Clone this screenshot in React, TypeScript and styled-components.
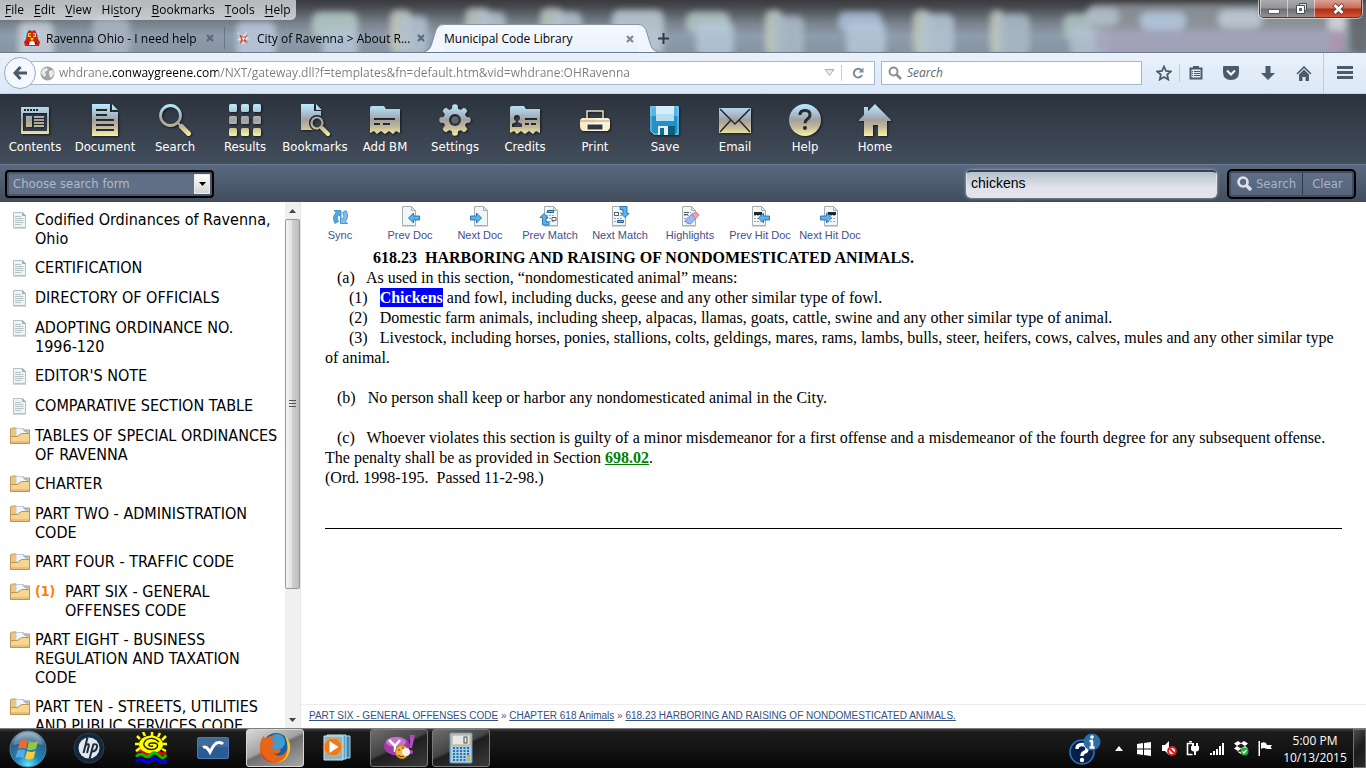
import React, { useId, useState } from "react";
import styled, { createGlobalStyle, css } from "styled-components";

const ui = `"Open Sans", "Noto Sans", sans-serif`;
const tahoma = `"DejaVu Sans Condensed", "Noto Sans", sans-serif`;
const arial = `"Liberation Sans", Arial, sans-serif`;
const times = `"Liberation Serif", "Times New Roman", serif`;

const GlobalStyle = createGlobalStyle`
  * { box-sizing: border-box; }
  body { margin: 0; background: #fff; color: #000; font-family: ${ui}; }
  button { border: 0; padding: 0; margin: 0; background: none; color: inherit; font: inherit; cursor: pointer; }
  svg { display: block; flex: none; }
`;

const Page = styled.div`
  height: 100vh;
  display: flex;
  flex-direction: column;
  overflow: hidden;
`;

/* ---------- window frame ---------- */

const Frame = styled.header`
  position: relative;
  height: 53px;
  flex: none;
  overflow: hidden;
  background: linear-gradient(#393b3e 0, #45484c 6px, #7b858f 24px, #8f9cab 36px, #8794a2 52px);
  border-bottom: 1px solid #6f7c8d;
`;

const Glass = styled.svg`
  position: absolute;
  inset: 0;
  width: 100%;
  height: 100%;
`;

const FrameContent = styled.div`
  position: relative;
  height: 100%;
  display: flex;
  flex-direction: column;
  justify-content: space-between;
`;

const TopRow = styled.div`
  display: flex;
  justify-content: space-between;
  align-items: flex-start;
  height: 20px;
`;

const MenuBar = styled.nav`
  display: flex;
  height: 20px;
  padding: 0 5px;
  gap: 10px;
  border-bottom-right-radius: 5px;
  background: rgba(232, 234, 237, 0.72);
  font-size: 12px;
  line-height: 20px;
  u { text-underline-offset: 2px; }
`;

const WindowButtons = styled.div`
  display: flex;
  height: 18px;
  margin-right: 4px;
  border: 1px solid #3b4046;
  border-top: 0;
  border-radius: 0 0 5px 5px;
  box-shadow: 0 0 0 1px rgba(255, 255, 255, 0.55);
  overflow: hidden;
`;

const WindowButton = styled.button<{ $close?: boolean }>`
  width: ${(p) => (p.$close ? 47 : 27)}px;
  display: flex;
  align-items: center;
  justify-content: center;
  border-left: 1px solid rgba(240, 240, 240, 0.6);
  background: ${(p) =>
    p.$close
      ? "linear-gradient(#d9a195 0, #cc6b58 8px, #b02a10 9px, #d0563a 17px)"
      : "linear-gradient(#a9abae 0, #929498 8px, #6c6e72 9px, #94918f 17px)"};
`;

const TabStrip = styled.div`
  display: flex;
  height: 28px;
  padding-left: 14px;
  font-size: 12px;
`;

const Tab = styled.div`
  display: flex;
  align-items: center;
  width: 210px;
  padding: 0 6px 0 10px;
`;

const TabDivider = styled.i`
  width: 1px;
  margin: 3px 0 3px 0;
  height: 22px;
  background: rgba(80, 92, 106, 0.55);
`;

const TabTitle = styled.button`
  display: flex;
  align-items: center;
  gap: 6px;
  flex: 1;
  min-width: 0;
  text-align: left;
  white-space: nowrap;
`;

const CloseButton = styled.button`
  width: 16px;
  height: 16px;
  display: grid;
  place-items: center;
`;

const ActiveTab = styled.div`
  display: flex;
  height: 28px;
  margin-left: -11px;
`;

const ActiveBody = styled.div`
  display: flex;
  align-items: center;
  width: 194px;
  background: linear-gradient(#f6faff, #e9f1fb);
  border-top: 1px solid #8996a6;
`;

const NewTab = styled.button`
  width: 24px;
  margin-left: -7px;
  display: grid;
  place-items: center;
`;

/* ---------- navigation bar ---------- */

const NavBar = styled.div`
  flex: none;
  height: 41px;
  display: flex;
  align-items: center;
  padding-left: 4px;
  background: linear-gradient(#e9f1fb, #dbe8f7);
  border-bottom: 1px solid #c3d3e6;
`;

const BackButton = styled.button`
  position: relative;
  z-index: 1;
  width: 32px;
  height: 32px;
  flex: none;
  border: 1px solid #98a9bf;
  border-radius: 50%;
  background: #f5f9fe;
  display: grid;
  place-items: center;
`;

const Field = styled.div<{ $kind: "address" | "search" }>`
  height: 24px;
  display: flex;
  align-items: center;
  background: #fff;
  border: 1px solid #a5b7ce;
  ${(p) =>
    p.$kind === "address"
      ? css`
          flex: 834 1 0;
          margin-left: -6px;
          padding-left: 9px;
        `
      : css`
          flex: 253 1 0;
          margin-left: 6px;
          padding-left: 6px;
        `}
`;

const UrlInput = styled.input`
  flex: 1;
  min-width: 0;
  height: 22px;
  margin-left: 4px;
  padding: 0;
  border: 0;
  outline: 0;
  font: 12px/22px ${ui};
  color: transparent;
  background: linear-gradient(to right, #7b7b7b 50px, #000 50px, #000 159px, #7b7b7b 159px);
  background-clip: text;
  -webkit-background-clip: text;
`;

const SearchInput = styled.input`
  flex: 1;
  min-width: 0;
  padding: 0;
  margin-left: 5px;
  border: 0;
  outline: 0;
  background: none;
  font: 12px/22px ${ui};
  &::placeholder { color: #666; font-style: italic; opacity: 1; }
`;

const ReloadButton = styled.button`
  width: 33px;
  height: 16px;
  border-left: 1px solid #c5d0dd;
  display: grid;
  place-items: center;
`;

const NavIcons = styled.div`
  display: flex;
  align-items: center;
  padding-left: 6px;
  height: 100%;
`;

const NavButton = styled.button<{ $w: number; $sep?: "short" | "full" }>`
  width: ${(p) => p.$w}px;
  height: ${(p) => (p.$sep === "full" ? "100%" : "18px")};
  display: grid;
  place-items: center;
  ${(p) => p.$sep && css`border-left: 1px solid #bccadb;`}
`;

/* ---------- site toolbar ---------- */

const Toolbar = styled.nav`
  flex: none;
  height: 70px;
  display: flex;
  background: linear-gradient(#2b323c, #434e5d);
`;

const ToolButton = styled.button`
  width: 70px;
  height: 70px;
  padding-top: 10px;
  display: flex;
  flex-direction: column;
  align-items: center;
  gap: 2px;
  color: #fff;
  font: 13px/18px ${tahoma};
  svg { filter: drop-shadow(1px 1px 1px rgba(0, 0, 0, 0.6)); }
`;

const QueryBar = styled.form`
  flex: none;
  height: 38px;
  display: flex;
  align-items: center;
  padding: 0 10px 0 5px;
  border-top: 1px solid #6c7c93;
  background: linear-gradient(#596980, #414d5c);
`;

const SelectBox = styled.label`
  position: relative;
  width: 209px;
  height: 28px;
  border: 2px solid #000;
  border-radius: 4px;
  padding: 2px;
  background: #48556a;
`;

const FormSelect = styled.select`
  display: block;
  width: 100%;
  height: 20px;
  appearance: none;
  border: 0;
  padding: 0 24px 0 4px;
  background: #606e86;
  color: #b0bac8;
  font: 13px/20px ${tahoma};
`;

const SelectArrow = styled.span`
  position: absolute;
  right: 2px;
  top: 2px;
  width: 16px;
  height: 20px;
  display: grid;
  place-items: center;
  background: linear-gradient(#fff, #d4d4d4);
  border: 1px solid #eee;
  pointer-events: none;
`;

const QueryInput = styled.input`
  width: 251px;
  height: 28px;
  margin-left: auto;
  padding: 0 4px 3px;
  border: 1px solid #dfe3e8;
  border-top: 2px solid #38424e;
  border-radius: 5px;
  outline: 0;
  background: linear-gradient(#b4c0cb, #dfe2ea 15px, #e3e5ec);
  box-shadow: 0 0 3px #b9c3cf;
  font: 14px/20px ${arial};
`;

const QueryButtons = styled.div`
  display: flex;
  margin-left: 10px;
  height: 30px;
  border: 2px solid #000;
  border-radius: 5px;
  padding: 2px;
  background: #414d5d;
`;

const QueryButton = styled.button<{ $w: number }>`
  width: ${(p) => p.$w}px;
  display: flex;
  align-items: center;
  justify-content: center;
  gap: 4px;
  background: linear-gradient(#5f6e86, #56647b);
  color: #a9b4c4;
  font: 13px/18px ${tahoma};
  & + & { border-left: 1px solid #323c49; }
`;

/* ---------- main ---------- */

const Main = styled.main`
  flex: 1;
  min-height: 0;
  display: flex;
`;

const Sidebar = styled.aside`
  width: 301px;
  flex: none;
  display: flex;
  overflow: hidden;
`;

const Contents = styled.ul`
  flex: 1;
  margin: 0;
  padding: 8px 6px 0 10px;
  list-style: none;
  overflow: hidden;
  font: 16px/19px ${tahoma};
`;

const ContentsItem = styled.li`
  display: flex;
  min-height: 20px;
  margin-bottom: 10px;
`;

const ItemIcon = styled.span`
  width: 25px;
  flex: none;
`;

const HitCount = styled.b`
  width: 30px;
  flex: none;
  color: #ff8000;
  font-size: 14px;
`;

const ItemLink = styled.a`
  color: #000;
  text-decoration: none;
`;

const ScrollTrack = styled.div`
  width: 16px;
  flex: none;
  display: flex;
  flex-direction: column;
  background: #f0f0f0;
  border-right: 1px solid #e6e6e6;
`;

const ScrollArrow = styled.span`
  height: 17px;
  display: grid;
  place-items: center;
`;

const ScrollThumb = styled.span`
  flex: 3;
  display: grid;
  place-items: center;
  border: 1px solid #979797;
  border-radius: 2px;
  background: linear-gradient(to right, #f4f4f4, #e3e3e3 45%, #cfcfcf 50%, #bdbdbd);
`;

const ScrollRest = styled.span`
  flex: 1;
`;

const Reader = styled.section`
  flex: 1;
  min-width: 0;
  display: flex;
  flex-direction: column;
`;

const ReaderTools = styled.nav`
  flex: none;
  display: flex;
  height: 46px;
  padding: 4px 4px 0;
`;

const ReaderTool = styled.button`
  width: 70px;
  display: flex;
  flex-direction: column;
  align-items: center;
  white-space: nowrap;
  color: #46508c;
  font: 11px/16px ${arial};
`;

const Article = styled.article`
  flex: 1;
  min-height: 0;
  padding: 0 24px;
  overflow: hidden;
  font: 16px/20px ${times};
  hr { margin: 40px 0 0; border: 0; border-top: 1px solid #000; }
`;

const Heading = styled.h1`
  margin: 0;
  font-size: 16px;
  line-height: 20px;
  text-indent: 48px;
  white-space: pre-wrap;
`;

const Para = styled.p<{ $indent?: number; $gap?: boolean }>`
  margin: ${(p) => (p.$gap ? 20 : 0)}px 0 0;
  text-indent: ${(p) => p.$indent ?? 0}px;
  white-space: pre-wrap;
`;

const Hit = styled.mark`
  display: inline-block;
  text-indent: 0;
  line-height: 19px;
  background: #00f;
  color: #fff;
  font-weight: bold;
`;

const SectionLink = styled.a`
  color: #008000;
  font-weight: bold;
`;

const Crumbs = styled.nav`
  flex: none;
  height: 24px;
  padding-left: 8px;
  border-top: 1px solid #ececec;
  color: #46608c;
  font: 10px/22px ${arial};
  white-space: pre;
  a { color: #33507f; }
`;

/* ---------- taskbar ---------- */

const Taskbar = styled.footer`
  flex: none;
  height: 40px;
  display: flex;
  background: linear-gradient(#3c3c3c, #1c1c1c 3px, #141414 20px, #060606);
  border-top: 1px solid #7d7d7d;
  color: #fff;
`;

const TaskButton = styled.button<{ $look?: "start" | "active" | "running" }>`
  width: ${(p) => (p.$look === "start" ? 56 : 58)}px;
  height: 38px;
  margin: 0 4px 0 0;
  display: grid;
  place-items: center;
  border: 1px solid transparent;
  border-radius: 3px;
  ${(p) =>
    p.$look === "active" &&
    css`
      border-color: #d8d8d8;
      background: linear-gradient(155deg, #d8d8d8, #a2a2a2 45%, #6f6f6f 50%, #a8a8a8);
    `}
  ${(p) =>
    p.$look === "running" &&
    css`
      border-color: #7a7a7a;
      background: linear-gradient(155deg, #6e6e6e, #444 45%, #1f1f1f 50%, #3a3a3a);
    `}
`;

const Tray = styled.div`
  margin-left: auto;
  display: flex;
  align-items: center;
`;

const TrayButton = styled.button<{ $w: number }>`
  width: ${(p) => p.$w}px;
  height: 38px;
  display: grid;
  place-items: center;
`;

const Clock = styled.time`
  width: 76px;
  text-align: center;
  font-size: 12px;
  line-height: 17px;
`;

const ShowDesktop = styled.button`
  width: 13px;
  height: 39px;
  border: 1px solid #6f6f6f;
  background: linear-gradient(135deg, #4a4a4a, #1b1b1b 50%, #2a2a2a);
`;

/* ---------- drawings ---------- */

/* Desktop icons seen through the glass frame: x, y, width, height, colour. */
const blobs: [number, number, number, number, string][] = [
  [18, 22, 36, 40, "#c6cdd4"], [92, 18, 38, 40, "#a9b5c2"], [236, 22, 40, 36, "#b9c8da"],
  [312, 12, 46, 26, "#b5c9c8"], [322, 30, 36, 30, "#b4c4d6"], [390, 10, 22, 44, "#c3c9bd"], [400, 16, 28, 40, "#b2c0cf"],
  [465, 8, 26, 40, "#bcc6bb"], [476, 12, 30, 40, "#b1bfcc"], [540, 8, 24, 40, "#bcc6bb"], [552, 12, 30, 40, "#b1bfcc"],
  [612, 10, 52, 44, "#bcc9d6"], [686, 12, 44, 22, "#b3c6c4"], [696, 22, 38, 34, "#b5c7d8"],
  [765, 10, 18, 46, "#bfc9be"], [774, 16, 30, 40, "#a9b8c6"], [838, 12, 44, 20, "#a9bfdb"], [846, 22, 40, 34, "#b5c7d8"],
  [913, 10, 18, 46, "#bfc9be"], [922, 14, 32, 42, "#b3c3d1"], [990, 10, 14, 46, "#bfc9be"], [1000, 14, 30, 42, "#a9b8c6"],
  [1063, 14, 40, 26, "#aec2c1"], [1070, 26, 40, 30, "#b1c1d0"], [1088, 4, 260, 26, "#8f959c"], [1085, 8, 34, 18, "#b4bfca"], [1140, 12, 46, 18, "#b4c8de"],
  [1218, 10, 44, 18, "#c2cdd6"], [1328, 12, 18, 22, "#d4d9dc"],
  [1095, 30, 250, 24, "#a5a3bb"], [1330, 30, 14, 24, "#ad93ad"], [1350, 0, 20, 54, "#626569"],
];

const GlassBackdrop = () => (
  <Glass aria-hidden="true">
    <defs>
      <filter id="soft" x="-2%" y="-50%" width="104%" height="200%">
        <feGaussianBlur stdDeviation="3" />
      </filter>
    </defs>
    <g filter="url(#soft)">
      {blobs.map(([x, y, w, h, c], i) => (
        <rect key={i} x={x} y={y} width={w} height={h} rx="8" fill={c} opacity="0.85" />
      ))}
    </g>
  </Glass>
);

const Cross = ({ color = "#5d6977" }) => (
  <svg width="8" height="8" viewBox="0 0 8 8" aria-hidden="true">
    <path d="M1 1l6 6M7 1l-6 6" stroke={color} strokeWidth="2.2" />
  </svg>
);

/* Shape cut out of a blue-to-sand gradient: white parts show, black parts are holes. */
const Metal = ({ children }: { children: React.ReactNode }) => {
  const id = useId();
  return (
    <svg width="32" height="32" viewBox="0 0 32 32" aria-hidden="true">
      <defs>
        <linearGradient id={`${id}g`} x1="0" y1="0" x2="0" y2="1">
          <stop offset="0" stopColor="#b9ecff" />
          <stop offset="0.3" stopColor="#a9bfd0" />
          <stop offset="0.5" stopColor="#a3a09f" />
          <stop offset="0.72" stopColor="#c3b998" />
          <stop offset="1" stopColor="#faf3a4" />
        </linearGradient>
        <mask id={`${id}m`} maskUnits="userSpaceOnUse" x="0" y="0" width="32" height="32">
          {children}
        </mask>
      </defs>
      <rect width="32" height="32" fill={`url(#${id}g)`} mask={`url(#${id}m)`} />
    </svg>
  );
};

const W = "#fff";
const K = "#000";

const ticketPath = "M1 4q0-2 2-2h12l2 3h14v24l-4-2-3 3-4-3-4 3-4-3-4 3-3-3-4 2z";

const toolIcons: Record<string, React.ReactNode> = {
  Contents: (
    <Metal>
      <path fill={W} d="M3 3h26q1 0 1 1v25q0 1-1 1H3q-1 0-1-1V4q0-1 1-1z" />
      <path fill={K} d="M4 9h24v18H4z" />
      <path stroke={K} strokeWidth="2" strokeDasharray="2 1" d="M5 6h14" />
      <path fill={W} d="M7 12h6v11H7zM15 12h10v2H15zM15 15h10v2H15zM15 18h10v2H15zM15 21h10v2H15z" />
    </Metal>
  ),
  Document: (
    <Metal>
      <path fill={W} d="M3 0h18v8h8v24H3zM23 0l6 6h-6z" />
      <path stroke={K} strokeWidth="2" d="M7 6h11M7 11h11M7 16h18M7 21h18M7 26h18" />
    </Metal>
  ),
  Search: (
    <Metal>
      <circle cx="11.500" cy="11.500" r="10" fill="none" stroke={W} strokeWidth="2.800" />
      <path stroke={W} strokeWidth="2" d="M18 18l4 4" />
      <path stroke={W} strokeWidth="5" strokeLinecap="round" d="M22.500 22.500l7 7" />
    </Metal>
  ),
  Results: (
    <Metal>
      {[0, 12, 24].map((y) => [0, 12, 24].map((x) => <rect key={`${x}-${y}`} x={x} y={y} width="8" height="8" rx="1.500" fill={W} />))}
    </Metal>
  ),
  Bookmarks: (
    <Metal>
      <path fill={W} d="M2 0h13v7h7v19H2zM17 0l6 6h-6z" />
      <circle cx="18" cy="19" r="8" fill={K} />
      <circle cx="18" cy="19" r="5.500" fill="none" stroke={W} strokeWidth="2.200" />
      <path stroke={K} strokeWidth="7" d="M22 23l9 9" />
      <path stroke={W} strokeWidth="4" strokeLinecap="round" d="M23 24l6 6" />
    </Metal>
  ),
  "Add BM": (
    <Metal>
      <path fill={W} d={ticketPath} />
      <path stroke={K} strokeWidth="2" d="M5 15h21M5 20h6M14 20h7" />
    </Metal>
  ),
  Settings: (
    <Metal>
      {[0, 45, 90, 135, 180, 225, 270, 315].map((a) => (
        <path key={a} fill={W} d="M12.500 7l1-6q2.500-1.500 5 0l1 6z" transform={`rotate(${a} 16 16)`} />
      ))}
      <circle cx="16" cy="16" r="11.500" fill={W} />
      <circle cx="16" cy="16" r="6" fill={K} />
      <circle cx="16" cy="16" r="3.500" fill={W} opacity="0.450" />
    </Metal>
  ),
  Credits: (
    <Metal>
      <path fill={W} d={ticketPath} />
      <circle cx="8" cy="14" r="3" fill={K} />
      <path fill={K} d="M7 15h2v3l4 2v3H3v-3l4-2z" />
      <path stroke={K} strokeWidth="2" d="M16 15h12M16 20h4M22 20h5" />
    </Metal>
  ),
  Print: (
    <svg width="32" height="32" viewBox="0 0 32 32" aria-hidden="true">
      <path d="M8 14V7h16v7" fill="none" stroke="#efe0b5" strokeWidth="1.500" />
      <path d="M3 14h26l2 2v6q0 4-3 5H4q-3-1-3-5v-6z" fill="#fbe9c0" />
      <path d="M16 14h13l2 2v6q0 4-3 5H16z" fill="#fff3da" opacity="0.700" />
      <path d="M1 17h30" stroke="#a8a191" />
      <path d="M8 20h16v6H8z" fill="#2c3540" stroke="#fff" />
    </svg>
  ),
  Save: (
    <svg width="32" height="32" viewBox="0 0 32 32" aria-hidden="true">
      <path d="M1 2h29v29H5l-4-4z" fill="#2490c4" />
      <path d="M1 2h29v10H1z" fill="#59b5de" />
      <path d="M2 3h27v27H5l-3-3z" fill="none" stroke="#7fd0ef" />
      <path d="M7 2h18v15H7z" fill="#d5eef9" />
      <path d="M7 10h18v7H7z" fill="#b7dff1" />
      <path d="M9 22h17v9H9z" fill="#05617f" />
      <path d="M9 22h10v9H9z" fill="#e6eef2" />
      <path d="M11 24h4v7h-4z" fill="#0b6f98" />
    </svg>
  ),
  Email: (
    <Metal>
      <path fill={W} d="M0 4h32v25H0z" />
      <path stroke={K} strokeWidth="1.500" fill="none" d="M1 5l15 15L31 5M1 28l11-12M31 28L20 16" />
    </Metal>
  ),
  Help: (
    <Metal>
      <circle cx="16" cy="16" r="16" fill={W} />
      <path d="M11 11q0-4.500 5-4.500t5 4.500q0 2.500-2.700 4.300-2.300 1.500-2.300 4" fill="none" stroke={K} strokeWidth="3" />
      <circle cx="16" cy="24" r="2" fill={K} />
    </Metal>
  ),
  Home: (
    <Metal>
      <path fill={W} d="M0 16L5 11V3h4v4l7-7 16 16v1h-4v15h-9V21h-5v11H5V17H0z" />
    </Metal>
  ),
};

const PageIcon = () => (
  <svg width="20" height="20" viewBox="0 0 20 20" aria-hidden="true">
    <path d="M3.500 2.500h9l3 3v12h-12z" fill="#eef4f3" stroke="#b3c3c3" />
    <path d="M12.500 2.500v3h3z" fill="#9fb4b6" stroke="#9fb4b6" />
    <path d="M5 6.500h6M5 8.500h8.500M5 10.500h8.500M5 12.500h8.500M5 14.500h6" stroke="#b4c4c5" />
    <path d="M3 18.500h13" stroke="#d0d8d8" />
  </svg>
);

const FolderIcon = () => (
  <svg width="20" height="20" viewBox="0 0 20 20" aria-hidden="true">
    <path d="M.500 17V3l1-1h5l1 2h12v13z" fill="#e6c68a" stroke="#c19a5b" />
    <path d="M6 11V2.500h8l3 3V9H9z" fill="#f3f7fa" stroke="#c4cfd5" />
    <path d="M12 3l3 3 3 1-1-3z" fill="#9db9c6" />
    <path d="M.500 17.500V10.500h7l4-3h8v10z" fill="#f6d590" stroke="#bd9454" />
    <path d="M1 15h18v2H1z" fill="#eabf70" />
  </svg>
);

const BlueArrow = ({ d }: { d: string }) => <path d={d} fill="#5fb1ea" stroke="#2b78b8" strokeLinejoin="round" />;

const DocSheet = ({ x, children }: { x: number; children?: React.ReactNode }) => (
  <svg width="22" height="21" viewBox="0 0 22 21" aria-hidden="true">
    <g transform={`translate(${x} 0)`}>
      <path d="M.500.500h9l4 4v15H.500z" fill="#f3f6f6" stroke="#a5b1b1" />
      <path d="M9.500.500v4h4z" fill="#dfe6e6" stroke="#a5b1b1" />
      <path d="M0 20.500h14" stroke="#d3d8d8" />
    </g>
    {children}
  </svg>
);

const Lines = ({ x }: { x: number }) => (
  <path d={`M${x} 6.500h7M${x} 9.500h9M${x} 12.500h9M${x} 15.500h9`} stroke="#9aa5a8" strokeDasharray="2 1" />
);

const left = "M9.500 12l5-5v3h6v4h-6v3z";
const right = "M12.500 12l-5-5v3h-6v4h6v3z";

const readerTools: [string, React.ReactNode][] = [
  [
    "Sync",
    <svg width="22" height="21" viewBox="0 0 22 21" aria-hidden="true">
      <path d="M5 4.500h7v6.500L9.800 8.800Q7 11 9.500 15.500L6 17.500Q2.500 11 7.200 6.500z" fill="#55a7e0" stroke="#2e86c8" strokeWidth=".8" />
      <path d="M18.500 17.500h-7V11l2.200 2.200Q16 10.500 13.500 6.500L17 4.500Q20.500 10.500 16.300 15.500z" fill="#7cc0ee" stroke="#2e86c8" strokeWidth=".8" />
    </svg>,
  ],
  ["Prev Doc", <DocSheet x={3}><BlueArrow d={left} /></DocSheet>],
  ["Next Doc", <DocSheet x={5}><BlueArrow d={right} /></DocSheet>],
  [
    "Prev Match",
    <DocSheet x={5}>
      <Lines x={7} />
      <path d="M8.500 4.500h6v2h-6z" fill="#79bff0" stroke="#215f96" />
      <path d="M13 11.500h4v3h-4z" fill="#fff" stroke="#55606a" />
      <BlueArrow d="M1 11.500L5 7.500l4 4H7v4.500h3v3H3.500v-7.500z" />
    </DocSheet>,
  ],
  [
    "Next Match",
    <DocSheet x={3}>
      <Lines x={5} />
      <path d="M5.500 6.500h4v3h-4z" fill="#fff" stroke="#55606a" />
      <path d="M8.500 14.500h6v2h-6z" fill="#79bff0" stroke="#215f96" />
      <BlueArrow d="M20 7.500l-4 4-4-4h2V3.500h-3V.500h7v7z" />
    </DocSheet>,
  ],
  [
    "Highlights",
    <DocSheet x={3}>
      <Lines x={5} />
      <path d="M5 6.500h5M5 8.500h4" stroke="#4d565c" />
      <path d="M13 8l4-2 3 3-4 4.500z" fill="#f3a4a8" stroke="#d27a80" />
      <path d="M13 8l3.500 5-5 5-4-1-1-3z" fill="#9fb8f0" stroke="#7690cf" />
    </DocSheet>,
  ],
  ["Prev Hit Doc", <DocSheet x={3}><Lines x={5} /><path d="M5 7.500h8" stroke="#1c2b33" strokeWidth="3" /><BlueArrow d={left} /></DocSheet>],
  ["Next Hit Doc", <DocSheet x={5}><Lines x={8} /><path d="M9 7.500h8" stroke="#1c2b33" strokeWidth="3" /><BlueArrow d={right} /></DocSheet>],
];

const StartOrb = () => (
  <svg width="38" height="38" viewBox="0 0 38 38" aria-hidden="true">
    <defs>
      <radialGradient id="orb" cx="0.5" cy="0.95" r="0.95">
        <stop offset="0" stopColor="#5fe6ff" />
        <stop offset="0.350" stopColor="#1f86b8" />
        <stop offset="0.750" stopColor="#2d5f86" />
        <stop offset="1" stopColor="#9bb3c4" />
      </radialGradient>
    </defs>
    <circle cx="19" cy="19" r="18" fill="url(#orb)" stroke="#4f7f9e" />
    <path d="M4 15Q7 3 19 3t15 12q-15-5-30 0z" fill="#fff" opacity="0.250" />
    <path d="M11 11q4-2 8 0l-2 8q-4-2-8 0z" fill="#ef6a2c" />
    <path d="M20 11.500q4 2 9-.500l-2 8q-5 2-9 .500z" fill="#93c83e" />
    <path d="M8.500 20.500q4-2 8 0l-2 7.500q-4-2-8 0z" fill="#5aa9e8" />
    <path d="M18 21q4 2 8.500 0l-2 7.500q-5 2-8.500 0z" fill="#fccd3b" />
  </svg>
);

const HpIcon = () => (
  <svg width="32" height="32" viewBox="0 0 32 32" aria-hidden="true">
    <circle cx="16" cy="16" r="15" fill="#14283b" stroke="#2b4053" />
    <circle cx="16" cy="16" r="10.500" fill="#e4e8ec" />
    <path d="M14.500 5.500L10.500 21M12.500 13q4-2 3.300 1L14 21M16.500 27l4-15M20 12.500q5-1 4 2.500-1 5-6 4.500" fill="none" stroke="#1b2d3e" strokeWidth="2" />
  </svg>
);

const SunIcon = () => (
  <svg width="32" height="32" viewBox="0 0 32 32" aria-hidden="true">
    <path d="M1 20q4-4 7 0t8 0 8 0 7 0" fill="none" stroke="#f00000" strokeWidth="3" />
    <path d="M5 7L2 4M10 4L8 0M17 4V0M23 5l2-4M27 8l4-4M28 12h4M4 12H0M5 16l-4 3M27 17l4 2" stroke="#ffff00" strokeWidth="2.500" />
    <ellipse cx="16" cy="12.500" rx="12" ry="9" fill="#ffff00" />
    <path d="M24 10Q18 4 11 8q-5 5 1 8.500 6 2.500 10-1 2-4-3-4.500-6-.500-5 2.500 2 1.500 4 .500" fill="none" stroke="#1a1a00" strokeWidth="1.400" />
    <path d="M1 24.500q4-4 8-1t7-1 8 1 7-1" fill="none" stroke="#00c000" strokeWidth="3" />
    <path d="M1 30q4-4 8-1t7-1 8 1 7-1" fill="none" stroke="#0000e0" strokeWidth="3.500" />
  </svg>
);

const CheckIcon = () => (
  <svg width="32" height="24" viewBox="0 0 32 24" aria-hidden="true">
    <rect x=".500" y="1.500" width="31" height="21" rx="1.500" fill="#2b5b95" stroke="#4c78ad" />
    <path d="M1 2h30v9H1z" fill="#47709f" opacity=".7" />
    <path d="M6 11.500q3.500-2 7 4.500 4.500-9 8-9.500 3-.500 5 1.500" fill="none" stroke="#fff" strokeWidth="3" />
  </svg>
);

const FirefoxIcon = () => (
  <svg width="32" height="32" viewBox="0 0 32 32" aria-hidden="true">
    <circle cx="17" cy="14" r="13" fill="#1c5f9e" />
    <circle cx="18" cy="10" r="8" fill="#3f9bd0" />
    <path d="M1 13Q2 6 5 4l1 3q5-4 10-3-4 2-3 5l4 1q-1 3-5 4 1 4 6 3 2 0 4 2-3 4-8 2 5 5 11 1 6-5 2-15 4 5 3 12-2 12-14 12Q4 31 1 21z" fill="#e8641b" />
    <path d="M26 4q7 6 4.500 16Q27 31 16 31q10-2 12-10t-2-17z" fill="#fcc62d" />
    <path d="M2 17q1 10 11 13-6 0-10-6-1-3-1-7z" fill="#c8371a" />
  </svg>
);

const PlayerIcon = () => (
  <svg width="30" height="28" viewBox="0 0 30 28" aria-hidden="true">
    <path d="M9 2h19v22H9z" fill="#3d87ad" stroke="#9fd0e6" />
    <path d="M5 1h19v24H5z" fill="#5ca2c4" stroke="#b9e0ef" />
    <path d="M2 2h19v24H2z" fill="#8ab6c9" stroke="#cfe6ef" />
    <circle cx="11" cy="13" r="9" fill="#ee7a1a" stroke="#f7a55c" />
    <path d="M7.500 7l9 6-9 6z" fill="#fff" />
  </svg>
);

const MessengerIcon = () => (
  <svg width="32" height="28" viewBox="0 0 32 28" aria-hidden="true">
    <ellipse cx="14" cy="12" rx="13" ry="9.500" fill="#a13ba8" />
    <ellipse cx="13" cy="8" rx="10" ry="5" fill="#d58bd9" opacity=".7" />
    <path d="M6 6l6 6 5-6M12 12v6" fill="none" stroke="#fff" strokeWidth="2.500" />
    <path d="M27 1h5l-3 13h-2z" fill="#b04bbd" />
    <circle cx="28" cy="18" r="2" fill="#b04bbd" />
    <circle cx="19" cy="18" r="6.500" fill="#f4b934" stroke="#c77d14" />
    <circle cx="23" cy="18" r="4" fill="#f3f3f3" />
    <path d="M15 16h2M19 14h2M15 21q3 3 6 1" stroke="#5a3200" fill="none" />
  </svg>
);

const CalculatorIcon = () => (
  <svg width="24" height="32" viewBox="0 0 24 32" aria-hidden="true">
    <rect x="1" y="1" width="22" height="30" rx="1" fill="#a5cfe8" stroke="#5f94b8" />
    <rect x="3" y="3" width="18" height="10" fill="#e3e9e6" stroke="#e79b4b" />
    <rect x="15" y="5" width="3" height="6" fill="none" stroke="#44525c" />
    {[16, 19, 22, 25, 28].map((y) => (
      <path key={y} d={`M4 ${y}h16`} stroke="#356f98" strokeWidth="2" strokeDasharray="2 1.500" />
    ))}
    <path d="M18 23h3v6h-3z" fill="#f2a13c" />
  </svg>
);

const HelpTray = () => (
  <svg width="32" height="32" viewBox="0 0 32 32" aria-hidden="true">
    <circle cx="13" cy="19" r="12" fill="#0a1f48" stroke="#2478c8" strokeWidth="1.500" />
    <path d="M8 16q0-4.500 5-4.500t5 4.500q0 2.500-3 3.500-2 1-2 3.500" fill="none" stroke="#fff" strokeWidth="3.400" />
    <circle cx="13" cy="27" r="2.200" fill="#fff" />
    <circle cx="23" cy="9" r="8.500" fill="#2b6ea6" />
    <path d="M23 8v7M20.500 8H24M20.500 14.500h5" stroke="#fff" strokeWidth="2.600" />
    <circle cx="23" cy="4" r="1.800" fill="#fff" />
  </svg>
);

const sections: { kind: "page" | "folder"; title: string; hits?: number }[] = [
  { kind: "page", title: "Codified Ordinances of Ravenna, Ohio" },
  { kind: "page", title: "CERTIFICATION" },
  { kind: "page", title: "DIRECTORY OF OFFICIALS" },
  { kind: "page", title: "ADOPTING ORDINANCE NO. 1996-120" },
  { kind: "page", title: "EDITOR'S NOTE" },
  { kind: "page", title: "COMPARATIVE SECTION TABLE" },
  { kind: "folder", title: "TABLES OF SPECIAL ORDINANCES OF RAVENNA" },
  { kind: "folder", title: "CHARTER" },
  { kind: "folder", title: "PART TWO - ADMINISTRATION CODE" },
  { kind: "folder", title: "PART FOUR - TRAFFIC CODE" },
  { kind: "folder", title: "PART SIX - GENERAL OFFENSES CODE", hits: 1 },
  { kind: "folder", title: "PART EIGHT - BUSINESS REGULATION AND TAXATION CODE" },
  { kind: "folder", title: "PART TEN - STREETS, UTILITIES AND PUBLIC SERVICES CODE" },
];

const steel = "#4d5a69";

export default function App() {
  const [query, setQuery] = useState("chickens");
  const [url, setUrl] = useState("whdrane.conwaygreene.com/NXT/gateway.dll?f=templates&fn=default.htm&vid=whdrane:OHRavenna");

  return (
    <Page>
      <GlobalStyle />
      <Frame>
        <GlassBackdrop />
        <FrameContent>
          <TopRow>
            <MenuBar aria-label="Menu">
              <button><u>F</u>ile</button>
              <button><u>E</u>dit</button>
              <button><u>V</u>iew</button>
              <button>Hi<u>s</u>tory</button>
              <button><u>B</u>ookmarks</button>
              <button><u>T</u>ools</button>
              <button><u>H</u>elp</button>
            </MenuBar>
            <WindowButtons>
              <WindowButton aria-label="Minimize">
                <svg width="12" height="12" viewBox="0 0 12 12"><path d="M.500 6.500h11v4H.500z" fill="#fff" stroke="#555b66" /></svg>
              </WindowButton>
              <WindowButton aria-label="Restore">
                <svg width="13" height="13" viewBox="0 0 13 13">
                  <path d="M4.500 1.500h7v7h-7z" fill="#ddd" stroke="#4b515c" />
                  <path d="M1.500 3.500h8v8h-8z" fill="#fff" stroke="#4b515c" />
                  <path d="M4.500 6.500h2v2h-2z" fill="#777" stroke="#4b515c" />
                </svg>
              </WindowButton>
              <WindowButton $close aria-label="Close">
                <svg width="13" height="12" viewBox="0 0 13 12">
                  <path d="M2 1.500l9 9M11 1.500l-9 9" stroke="#5d3a3c" strokeWidth="4.500" />
                  <path d="M2.500 2l8 8M10.500 2l-8 8" stroke="#fff" strokeWidth="2.800" />
                </svg>
              </WindowButton>
            </WindowButtons>
          </TopRow>
          <TabStrip>
            <Tab>
              <TabTitle>
                <svg width="16" height="16" viewBox="0 0 16 16" aria-hidden="true">
                  <path d="M0 0h16v16H0z" fill="#9fd4f2" />
                  <path d="M3 3l2-3 3 1 3-1 2 4 1 5 2 3-1 4H1l-1-4 2-3z" fill="#d81e12" />
                  <path d="M4 3h3v4H4zM9 3h3v4H9zM6 8h4l-2 3z" fill="#ffd21e" />
                  <path d="M5 15q0-4 3-4t3 4z" fill="#fff" />
                  <path d="M5 5h2M9 5h2M3 12l2 2M13 12l-2 2" stroke="#2a1200" />
                </svg>
                Ravenna Ohio - I need help
              </TabTitle>
              <CloseButton aria-label="Close tab"><Cross /></CloseButton>
            </Tab>
            <TabDivider />
            <Tab>
              <TabTitle>
                <svg width="16" height="16" viewBox="0 0 16 16" aria-hidden="true">
                  <path d="M2 2l6 4 4-5-1 6 4 2-5 1-2 5-2-4-4-1 3-3z" fill="#e8e2e2" />
                  <path d="M4 4l5 3 4-3-3 5 3 4-5-2-3 3 1-5z" fill="#c94b40" />
                  <path d="M7 7l3 1-2 3z" fill="#fff" />
                </svg>
                City of Ravenna &gt; About R...
              </TabTitle>
              <CloseButton aria-label="Close tab"><Cross /></CloseButton>
            </Tab>
            <ActiveTab>
              <svg width="20" height="28" viewBox="0 0 20 28" aria-hidden="true">
                <path d="M0 28Q6 27 8 19L11 9Q13 0 20 0V28z" fill="#f1f6fd" />
                <path d="M0 27.500Q6 27 8 19L11 9Q13 .500 20 .500" fill="none" stroke="#7f8c9c" />
              </svg>
              <ActiveBody>
                <TabTitle>Municipal Code Library</TabTitle>
                <CloseButton aria-label="Close tab"><Cross color="#7d8998" /></CloseButton>
              </ActiveBody>
              <svg width="20" height="28" viewBox="0 0 20 28" aria-hidden="true">
                <path d="M20 28Q14 27 12 19L9 9Q7 0 0 0V28z" fill="#f1f6fd" />
                <path d="M20 27.500Q14 27 12 19L9 9Q7 .500 0 .500" fill="none" stroke="#7f8c9c" />
              </svg>
            </ActiveTab>
            <NewTab aria-label="New tab">
              <svg width="11" height="11" viewBox="0 0 11 11"><path d="M5.500 0v11M0 5.500h11" stroke="#2f3a46" strokeWidth="2" /></svg>
            </NewTab>
          </TabStrip>
        </FrameContent>
      </Frame>

      <NavBar>
        <BackButton aria-label="Back">
          <svg width="15" height="14" viewBox="0 0 15 14"><path d="M7.500 1L2 7l5.500 6M2.500 7H14" fill="none" stroke={steel} strokeWidth="3" /></svg>
        </BackButton>
        <Field $kind="address">
          <svg width="15" height="15" viewBox="0 0 15 15" aria-hidden="true">
            <circle cx="7.500" cy="7.500" r="7" fill="#a3a6a9" />
            <path d="M3 3l4-1 1 2-3 2 1 3-2 2-3-4zM9 5l4-1 1 4-3 4-2-3z" fill="#e8eaeb" />
          </svg>
          <UrlInput aria-label="Address" value={url} onChange={(e) => setUrl(e.target.value)} spellCheck={false} />
          <svg width="22" height="8" viewBox="0 0 22 8" aria-hidden="true"><path d="M6 .500h9l-4.500 6z" fill="#e6ebf1" stroke="#a3b0c0" /></svg>
          <ReloadButton aria-label="Reload">
            <svg width="12" height="12" viewBox="0 0 12 12">
              <path d="M9.500 3.500A4.300 4.300 0 1 0 10 8" fill="none" stroke="#7d8b9d" strokeWidth="2" />
              <path d="M11.500.500v5h-5z" fill="#7d8b9d" />
            </svg>
          </ReloadButton>
        </Field>
        <Field $kind="search">
          <svg width="14" height="14" viewBox="0 0 14 14" aria-hidden="true">
            <circle cx="5.500" cy="5.500" r="4" fill="none" stroke="#8f8f8f" strokeWidth="2" />
            <path d="M8.500 8.500l4.500 4.500" stroke="#8f8f8f" strokeWidth="2.500" />
          </svg>
          <SearchInput aria-label="Search the web" placeholder="Search" />
        </Field>
        <NavIcons>
          <NavButton $w={31} aria-label="Bookmark this page">
            <svg width="16" height="16" viewBox="0 0 16 16"><path d="M8 1.500l2 4.500 4.800.500-3.600 3.200 1 4.800L8 12l-4.200 2.500 1-4.800L1.200 6.500 6 6z" fill="none" stroke={steel} strokeWidth="1.800" /></svg>
          </NavButton>
          <NavButton $w={33} $sep="short" aria-label="Show bookmarks">
            <svg width="14" height="16" viewBox="0 0 14 16">
              <path d="M1.500 3.500h11v10h-11z" fill="none" stroke={steel} strokeWidth="2" />
              <path d="M4 1h6v3H4z" fill={steel} />
              <path d="M3 6.500h1M5 6.500h6M3 8.500h1M5 8.500h6M3 10.500h1M5 10.500h6" stroke={steel} />
            </svg>
          </NavButton>
          <NavButton $w={38} aria-label="Save to Pocket">
            <svg width="16" height="14" viewBox="0 0 16 14">
              <path d="M1 0h14q1 0 1 1v5q0 8-8 8T0 6V1q0-1 1-1z" fill={steel} />
              <path d="M4 4.500l4 4 4-4" fill="none" stroke="#fff" strokeWidth="2" />
            </svg>
          </NavButton>
          <NavButton $w={35} aria-label="Downloads">
            <svg width="14" height="14" viewBox="0 0 14 14"><path d="M4.500 0h5v7H14l-7 7-7-7h4.500z" fill={steel} /></svg>
          </NavButton>
          <NavButton $w={38} aria-label="Home">
            <svg width="16" height="15" viewBox="0 0 16 15">
              <path d="M1 8l7-7 7 7" fill="none" stroke={steel} strokeWidth="1.600" />
              <path d="M3 8.500l5-5 5 5V15H9.500v-4h-3v4H3z" fill={steel} />
            </svg>
          </NavButton>
          <NavButton $w={43} $sep="full" aria-label="Open menu">
            <svg width="16" height="14" viewBox="0 0 16 14"><path d="M0 1.500h16M0 6.500h16M0 11.500h16" stroke={steel} strokeWidth="3" /></svg>
          </NavButton>
        </NavIcons>
      </NavBar>

      <Toolbar aria-label="Library">
        {Object.entries(toolIcons).map(([label, icon]) => (
          <ToolButton key={label}>{icon}{label}</ToolButton>
        ))}
      </Toolbar>

      <QueryBar onSubmit={(e) => e.preventDefault()}>
        <SelectBox>
          <FormSelect aria-label="Search form">
            <option>Choose search form</option>
          </FormSelect>
          <SelectArrow><svg width="7" height="4" viewBox="0 0 7 4"><path d="M0 0h7L3.500 4z" fill="#000" /></svg></SelectArrow>
        </SelectBox>
        <QueryInput aria-label="Search terms" value={query} onChange={(e) => setQuery(e.target.value)} />
        <QueryButtons>
          <QueryButton $w={71} type="submit">
            <svg width="15" height="15" viewBox="0 0 15 15" aria-hidden="true">
              <circle cx="6" cy="6" r="4.500" fill="none" stroke="#dde2ea" strokeWidth="2.600" />
              <path d="M9 9l5 5" stroke="#dde2ea" strokeWidth="3.400" />
            </svg>
            Search
          </QueryButton>
          <QueryButton $w={50} type="button" onClick={() => setQuery("")}>Clear</QueryButton>
        </QueryButtons>
      </QueryBar>

      <Main>
        <Sidebar>
          <Contents>
            {sections.map((s) => (
              <ContentsItem key={s.title}>
                <ItemIcon>{s.kind === "page" ? <PageIcon /> : <FolderIcon />}</ItemIcon>
                {s.hits && <HitCount>({s.hits})</HitCount>}
                <ItemLink href="#">{s.title}</ItemLink>
              </ContentsItem>
            ))}
          </Contents>
          <ScrollTrack aria-hidden="true">
            <ScrollArrow><svg width="7" height="4" viewBox="0 0 7 4"><path d="M0 4h7L3.500 0z" fill="#444" /></svg></ScrollArrow>
            <ScrollThumb><svg width="7" height="8" viewBox="0 0 7 8"><path d="M0 .500h7M0 3.500h7M0 6.500h7" stroke="#555" /></svg></ScrollThumb>
            <ScrollRest />
            <ScrollArrow><svg width="7" height="4" viewBox="0 0 7 4"><path d="M0 0h7L3.500 4z" fill="#444" /></svg></ScrollArrow>
          </ScrollTrack>
        </Sidebar>

        <Reader>
          <ReaderTools aria-label="Document">
            {readerTools.map(([label, icon]) => (
              <ReaderTool key={label}>{icon}{label}</ReaderTool>
            ))}
          </ReaderTools>
          <Article>
            <Heading>{"618.23  HARBORING AND RAISING OF NONDOMESTICATED ANIMALS."}</Heading>
            <Para $indent={12}>{"(a)   As used in this section, “nondomesticated animal” means:"}</Para>
            <Para $indent={24}>{"(1)   "}<Hit>Chickens</Hit>{" and fowl, including ducks, geese and any other similar type of fowl."}</Para>
            <Para $indent={24}>{"(2)   Domestic farm animals, including sheep, alpacas, llamas, goats, cattle, swine and any other similar type of animal."}</Para>
            <Para $indent={24}>{"(3)   Livestock, including horses, ponies, stallions, colts, geldings, mares, rams, lambs, bulls, steer, heifers, cows, calves, mules and any other similar type of animal."}</Para>
            <Para $indent={12} $gap>{"(b)   No person shall keep or harbor any nondomesticated animal in the City."}</Para>
            <Para $indent={12} $gap>
              {"(c)   Whoever violates this section is guilty of a minor misdemeanor for a first offense and a misdemeanor of the fourth degree for any subsequent offense. The penalty shall be as provided in Section "}
              <SectionLink href="#">698.02</SectionLink>.
            </Para>
            <Para>{"(Ord. 1998-195.  Passed 11-2-98.)"}</Para>
            <hr />
          </Article>
          <Crumbs aria-label="Breadcrumb">
            <a href="#">PART SIX - GENERAL OFFENSES CODE</a>{" » "}
            <a href="#">CHAPTER 618 Animals</a>{" » "}
            <a href="#">618.23 HARBORING AND RAISING OF NONDOMESTICATED ANIMALS.</a>
          </Crumbs>
        </Reader>
      </Main>

      <Taskbar>
        <TaskButton $look="start" aria-label="Start"><StartOrb /></TaskButton>
        <TaskButton aria-label="HP"><HpIcon /></TaskButton>
        <TaskButton aria-label="Sun"><SunIcon /></TaskButton>
        <TaskButton aria-label="Check"><CheckIcon /></TaskButton>
        <TaskButton $look="active" aria-label="Firefox"><FirefoxIcon /></TaskButton>
        <TaskButton aria-label="Media player"><PlayerIcon /></TaskButton>
        <TaskButton $look="running" aria-label="Messenger"><MessengerIcon /></TaskButton>
        <TaskButton $look="running" aria-label="Calculator"><CalculatorIcon /></TaskButton>
        <Tray>
          <TrayButton $w={44} aria-label="Help and support"><HelpTray /></TrayButton>
          <TrayButton $w={24} aria-label="Show hidden icons">
            <svg width="8" height="5" viewBox="0 0 8 5"><path d="M0 5h8L4 0z" fill="#fff" /></svg>
          </TrayButton>
          <TrayButton $w={26} aria-label="Windows">
            <svg width="14" height="14" viewBox="0 0 14 14"><path d="M0 2l6-1v5.500H0zM7 1l7-1v6.500H7zM0 7.500h6V13l-6-1zM7 7.500h7V14l-7-1z" fill="#fff" /></svg>
          </TrayButton>
          <TrayButton $w={24} aria-label="Volume">
            <svg width="15" height="15" viewBox="0 0 15 15">
              <path d="M0 4h3v6H0zM3 4l4-4v14l-4-4z" fill="#fff" />
              <circle cx="10" cy="10" r="4" fill="#e8e8e8" stroke="#d91e1e" strokeWidth="1.800" />
              <path d="M7.500 7.500l5 5" stroke="#d91e1e" strokeWidth="1.800" />
            </svg>
          </TrayButton>
          <TrayButton $w={24} aria-label="Power">
            <svg width="14" height="15" viewBox="0 0 14 15">
              <path d="M6 2.500H1.500v11h5M3 .500h3" fill="none" stroke="#fff" strokeWidth="1.600" />
              <path d="M5 5h8v3q0 2-3 2.500V14H8v-3.500Q5 10 5 8zM6 2h2v3H6zM10 2h2v3h-2z" fill="#fff" />
            </svg>
          </TrayButton>
          <TrayButton $w={24} aria-label="Network">
            <svg width="14" height="12" viewBox="0 0 14 12"><path d="M0 10h2v2H0zM3 8h2v4H3zM6 6h2v6H6zM9 3h2v9H9zM12 0h2v12h-2z" fill="#fff" /></svg>
          </TrayButton>
          <TrayButton $w={24} aria-label="Dropbox">
            <svg width="15" height="15" viewBox="0 0 15 15">
              <path d="M0 2.500L4 0l3 2 3-2 4 2.500L11 5l3 2.500-4 2.500-3-2-3 2-4-2.500L3 5zM3 10.500l4 2.500 3-2" fill="#fff" />
              <path d="M7 2.500L11 5 7 7.500 3 5z" fill="#222" />
              <circle cx="10.500" cy="10.500" r="4" fill="#22a83b" />
              <path d="M8.500 10.500l1.500 1.500 2.500-3" fill="none" stroke="#fff" strokeWidth="1.200" />
            </svg>
          </TrayButton>
          <TrayButton $w={24} aria-label="Action center">
            <svg width="15" height="15" viewBox="0 0 15 15"><path d="M.500 0h1.500v15H.500zM3 2q3-1.500 5 0l1 2h5l-1.500 2 1.500 2H9L8 7.500Q5 6.500 3 8z" fill="#fff" /></svg>
          </TrayButton>
          <Clock>5:00 PM<br />10/13/2015</Clock>
          <ShowDesktop aria-label="Show desktop" />
        </Tray>
      </Taskbar>
    </Page>
  );
}
